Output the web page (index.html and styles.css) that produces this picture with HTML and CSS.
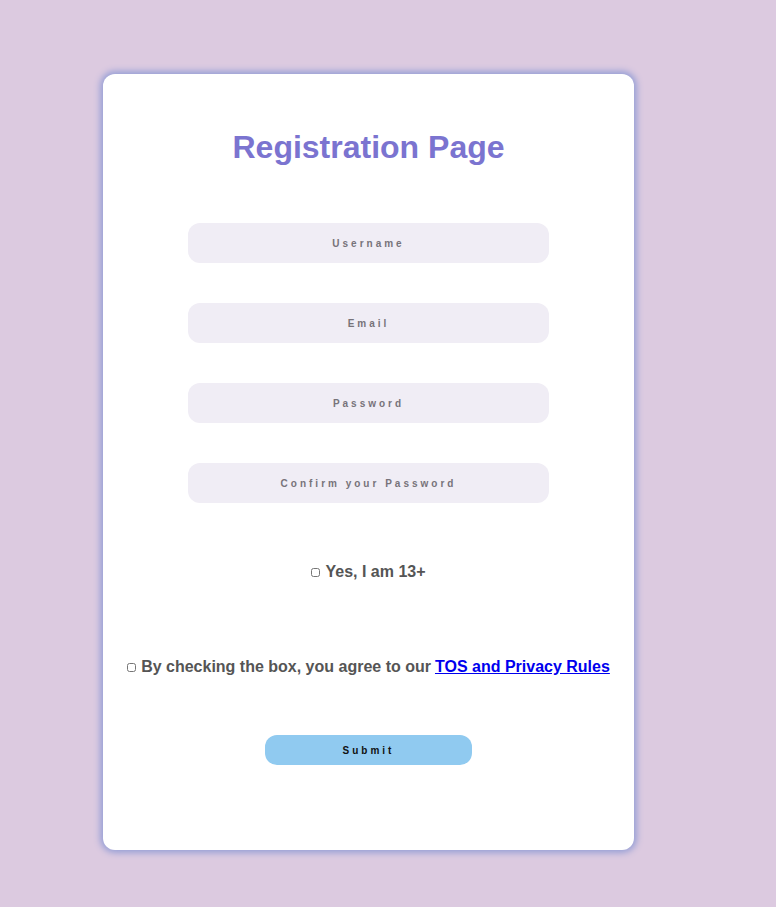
FILE: index.html
```html
<!DOCTYPE html>
<html>
<head>
<meta charset="utf-8">
<link rel="stylesheet" href="styles.css">
</head>
<body>
<div class="card">
  <h1 class="title">Registration Page</h1>
  <form class="form">
    <input class="field" type="text" placeholder="Username">
    <input class="field" type="email" placeholder="Email">
    <input class="field" type="password" placeholder="Password">
    <input class="field" type="password" placeholder="Confirm your Password">
    <label class="check age"><input type="checkbox" class="box"> Yes, I am 13+</label>
    <label class="check tos"><input type="checkbox" class="box"> By checking the box, you agree to our <a href="#" class="link">TOS and Privacy Rules</a></label>
    <button type="button" class="submit">Submit</button>
  </form>
</div>
</body>
</html>
```
FILE: styles.css
```css
html, body {
  margin: 0;
  padding: 0;
}
body {
  background: #dccae0;
  font-family: "Liberation Sans", Arial, sans-serif;
  height: 907px;
  padding-top: 74px;
  box-sizing: border-box;
}
.card {
  margin-left: 103px;
  width: 531px;
  height: 776px;
  background: #fff;
  border-radius: 12px;
  box-shadow: 0 0 6px 3px #98a0d6;
  box-sizing: border-box;
  display: flex;
  flex-direction: column;
  align-items: center;
  padding-top: 53px;
}
.title {
  margin: 0;
  font-size: 32px;
  line-height: 40px;
  color: #7b74d0;
  font-weight: bold;
}
.form {
  display: flex;
  flex-direction: column;
  align-items: center;
  margin-top: 56px;
  width: 100%;
}
.field {
  width: 361px;
  height: 40px;
  box-sizing: border-box;
  border: none;
  border-radius: 12px;
  background: #f0edf5;
  text-align: center;
  font-family: "Liberation Sans", Arial, sans-serif;
  font-size: 10px;
  font-weight: bold;
  letter-spacing: 3px;
  margin-bottom: 40px;
  outline: none;
}
.field::placeholder {
  color: #77737a;
}
.check {
  font-size: 16px;
  font-weight: bold;
  color: #555;
  display: flex;
  align-items: center;
}
.age {
  margin-top: 20px;
}
.tos {
  margin-top: 77px;
}
.box {
  width: 9px;
  height: 9px;
  margin: 0 5px 0 0;
}
.link {
  color: #0000ee;
  margin-left: 4px;
}
.submit {
  margin-top: 59px;
  width: 207px;
  height: 30px;
  border: none;
  border-radius: 12px;
  background: #90caf0;
  font-family: "Liberation Sans", Arial, sans-serif;
  font-size: 10px;
  font-weight: bold;
  letter-spacing: 3px;
  color: #111;
}
```
